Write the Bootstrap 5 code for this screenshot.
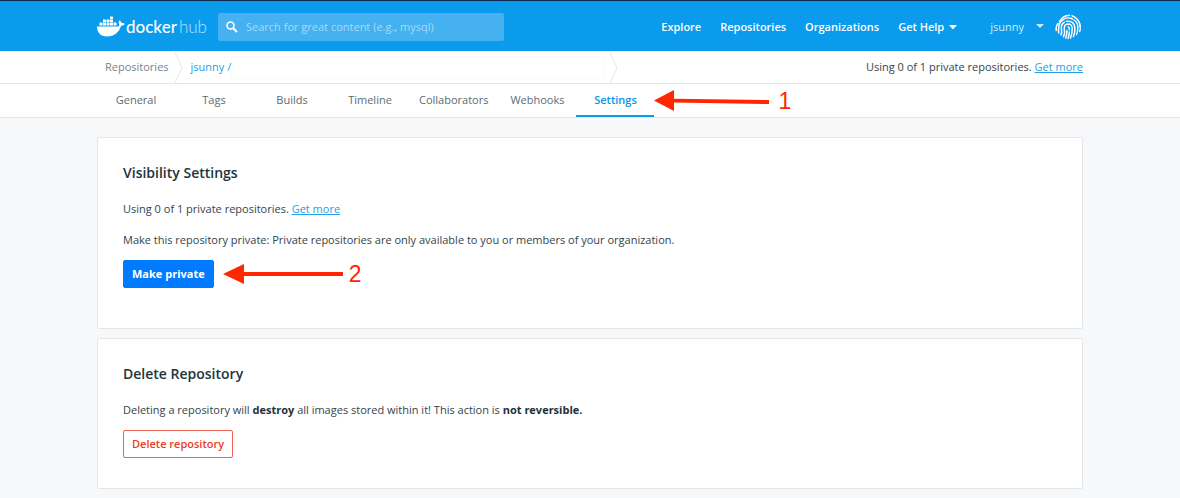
<!DOCTYPE html>
<html lang="en">
<head>
<meta charset="utf-8">
<meta name="viewport" content="width=device-width, initial-scale=1">
<title>Docker Hub – Repository settings</title>
<link href="https://cdn.jsdelivr.net/npm/bootstrap@5.3.0/dist/css/bootstrap.min.css" rel="stylesheet">
<style>
  body { font-family: "Open Sans", sans-serif; font-size: 11px; line-height: 16px; color: #33444c; background: #f7f8fa; }
  a { color: #27a0e8; }
  .page-width { max-width: 986px; padding: 0; }
  .topbar { background: #0a9bed; border-top: 1px solid #0b2b50; height: 51px; padding-top: 1px; }
  .topbar a { color: #fff; font-weight: 600; text-decoration: none; }
  .brand { width: 121px; }
  .brand-name { font-family: Lato, sans-serif; font-size: 17px; line-height: 24px; font-weight: 500; margin-left: 1px; }
  .brand-name span { font-weight: 300; color: #b5e1fa; margin-left: 2px; }
  .search-box { background: #45b1f0; border-radius: 2px; width: 286px; height: 28px; padding-left: 8px; }
  .search-box input { background: transparent; border: 0; color: #fff; font-size: 11px; line-height: 16px; padding: 0; box-shadow: none; }
  .search-box input:focus { background: transparent; color: #fff; box-shadow: none; }
  .search-box input::placeholder { color: #a5daf8; opacity: 1; }
  .main-links { gap: 19px; }
  .topbar .account { color: #ceebfb; font-weight: 400; margin: 0 11px 0 32px; }
  .help-caret { vertical-align: middle; }
  .crumbs { background: #fff; border-bottom: 1px solid #e4e7e9; height: 33px; }
  .crumbs .trail { padding-left: 8px; }
  .crumbs .trail a { text-decoration: none; }
  .crumbs .trail a.parent { color: #78858b; }
  .repo-name { width: 374px; height: 23px; border: 1px dotted #f6f6f6; border-radius: 3px; }
  .tabs { background: #fff; border-bottom: 1px solid #e4e7e9; height: 34px; }
  .tabs .nav-link { min-width: 78px; height: 33px; padding: 8px 10px; text-align: center; color: #5c6b73; border-bottom: 2px solid transparent; }
  .tabs .nav-link.active { color: #0a95e4; font-weight: 600; border-color: #0a9bed; }
  .panels { padding-top: 19px; gap: 9px; }
  .panel { background: #fff; border: 1px solid #e4e7ea; border-radius: 2px; padding: 25px 25px 30px; }
  .panel-tall { padding-bottom: 40px; }
  .panel h2 { font-size: 14px; line-height: 20px; font-weight: 600; color: #22333c; margin-bottom: 18px; }
  .panel p { margin-bottom: 15px; }
  .panel p.before-action { margin-bottom: 12px; }
  .panel b { color: #22313a; }
  .action { font-size: 11px; line-height: 16px; padding: 5px 8px; border-radius: 2px; }
  .action-private { background: #007bff; border-color: #007bff; color: #fff; font-weight: 700; }
  .action-delete { color: #f03a24; border-color: #ee6352; font-weight: 600; background: #fff; }
  .step { color: #ff2600; font: 23px/24px "Liberation Sans", sans-serif; margin-left: 6px; }
</style>
</head>
<body>
<header class="topbar">
  <div class="container-fluid page-width h-100 d-flex align-items-center">
    <a class="brand d-flex align-items-center" href="#" aria-label="Docker Hub">
      <svg width="28" height="22" viewBox="0 0 28 22" fill="#fff" aria-hidden="true">
        <path d="M0 10.500h19.500c1.500 0 2.700-.5 3-1.500-1.200-1.500-1-3.500.1-4.800 1.200.9 1.900 1.900 2 3 1-.2 2.300-.1 3.200.5-.7 1.500-2 2.100-3.800 2.100C22 16.500 17.500 20.500 10 20.500 3.500 20.500 0 16.500 0 10.500z"/>
        <path d="M2.500 6.500h3v3h-3zM6 6.500h3v3H6zM9.500 6.500h3v3h-3zM13 6.500h3v3h-3zM16.500 6.500h3v3h-3zM6 3.500h3v2.500H6zM9.500 3.500h3v2.500h-3zM13 3.500h3v2.500h-3zM13 .5h3V3h-3z"/>
      </svg>
      <span class="brand-name text-nowrap">docker<span>hub</span></span>
    </a>
    <form class="search-box d-flex align-items-center" role="search">
      <svg width="12" height="12" viewBox="0 0 12 12" fill="none" stroke="#fff" class="flex-shrink-0" aria-hidden="true">
        <circle cx="4.500" cy="4.500" r="3.500" stroke-width="1.600"/><path d="M7.200 7.200l3.800 3.800" stroke-width="2"/>
      </svg>
      <input class="form-control ms-2" type="search" placeholder="Search for great content (e.g., mysql)" aria-label="Search">
    </form>
    <nav class="main-links d-flex align-items-center ms-auto text-nowrap">
      <a href="#">Explore</a><a href="#">Repositories</a><a href="#">Organizations</a>
      <a href="#">Get Help<svg class="help-caret ms-1" width="10" height="5" viewBox="0 0 10 5" aria-hidden="true"><path d="M1 0h8L5 4.500z" fill="#fff"/></svg></a>
    </nav>
    <a class="account d-flex align-items-center" href="#">jsunny<svg class="ms-2" width="12" height="5" viewBox="0 0 12 5" aria-hidden="true"><path d="M4 0h8L8 4z" fill="#ceebfb"/></svg></a>
    <svg width="28" height="26" viewBox="0 0 28 26" fill="none" stroke="#fff" stroke-width="1.500" stroke-linecap="round" aria-label="Account picture" role="img">
      <path d="M4.500 7.500A12 12 0 0 1 14.500 1.200M17 1.800A12 12 0 0 1 25.300 14M25.200 15.500q-.2 1-.6 2M1.200 16.500Q.8 12 3 9.500"/>
      <path d="M3.600 19Q3 10 6.500 7A9.300 9.300 0 0 1 17.500 5M19 6Q23.500 9 22.800 14.500T21.500 20.500"/>
      <path d="M6 21Q7 19 6.500 15.500A6.700 6.700 0 0 1 9.500 8.200M11.500 7.200Q19 6.500 19.800 13 20.200 18 18.500 22.500"/>
      <path d="M8.500 22.800Q10.300 18.500 9.300 14.500 9 10.300 13 10 16.800 10 17.200 14 17.400 19 15.500 24"/>
      <path d="M13.200 12.800q1.300.8 1.200 3M12 16.500q0 4-1.300 7.500M14.300 18q0 3-1.200 6.500"/>
    </svg>
  </div>
</header>

<div class="crumbs">
  <div class="container-fluid page-width h-100 d-flex align-items-center">
    <nav class="trail d-flex align-items-center text-nowrap h-100" aria-label="Breadcrumb">
      <a class="parent" href="#">Repositories</a>
      <svg class="mx-1" width="14" height="32" viewBox="0 0 14 32" fill="none" stroke="#e4e7e9" aria-hidden="true"><path d="M2 1.500l7 15L2 32"/></svg>
      <a href="#">jsunny /</a>
      <span class="repo-name"></span>
      <svg class="ms-1" width="10" height="32" viewBox="0 0 10 32" fill="none" stroke="#e4e7e9" aria-hidden="true"><path d="M1 1.500l7 15L1 32"/></svg>
    </nav>
    <div class="ms-auto text-nowrap">Using 0 of 1 private repositories. <a href="#">Get more</a></div>
  </div>
</div>

<div class="tabs">
  <div class="container-fluid page-width d-flex align-items-center">
    <nav class="nav flex-nowrap">
      <a class="nav-link" href="#">General</a>
      <a class="nav-link" href="#">Tags</a>
      <a class="nav-link" href="#">Builds</a>
      <a class="nav-link" href="#">Timeline</a>
      <a class="nav-link" href="#">Collaborators</a>
      <a class="nav-link" href="#">Webhooks</a>
      <a class="nav-link active" href="#" aria-current="page">Settings</a>
    </nav>
    <svg width="118" height="22" viewBox="0 0 118 22" fill="#ff2600" aria-hidden="true"><path d="M0 10.500L20 0v8.800L115 10v4L20 12.500V21z"/></svg>
    <span class="step">1</span>
  </div>
</div>

<main class="panels container-fluid page-width d-flex flex-column">
  <section class="panel panel-tall">
    <h2>Visibility Settings</h2>
    <p>Using 0 of 1 private repositories. <a href="#">Get more</a></p>
    <p class="before-action">Make this repository private: Private repositories are only available to you or members of your organization.</p>
    <div class="d-flex align-items-center">
      <button type="button" class="btn action action-private">Make private</button>
      <svg class="ms-2" width="121" height="22" viewBox="0 0 121 22" fill="#ff2600" aria-hidden="true"><path d="M1 11L22 1v8h99v4H22v8z"/></svg>
      <span class="step">2</span>
    </div>
  </section>
  <section class="panel">
    <h2>Delete Repository</h2>
    <p class="before-action">Deleting a repository will <b>destroy</b> all images stored within it! This action is <b>not reversible.</b></p>
    <button type="button" class="btn action action-delete">Delete repository</button>
  </section>
</main>
<script src="https://cdn.jsdelivr.net/npm/bootstrap@5.3.0/dist/js/bootstrap.bundle.min.js"></script>
</body>
</html>
